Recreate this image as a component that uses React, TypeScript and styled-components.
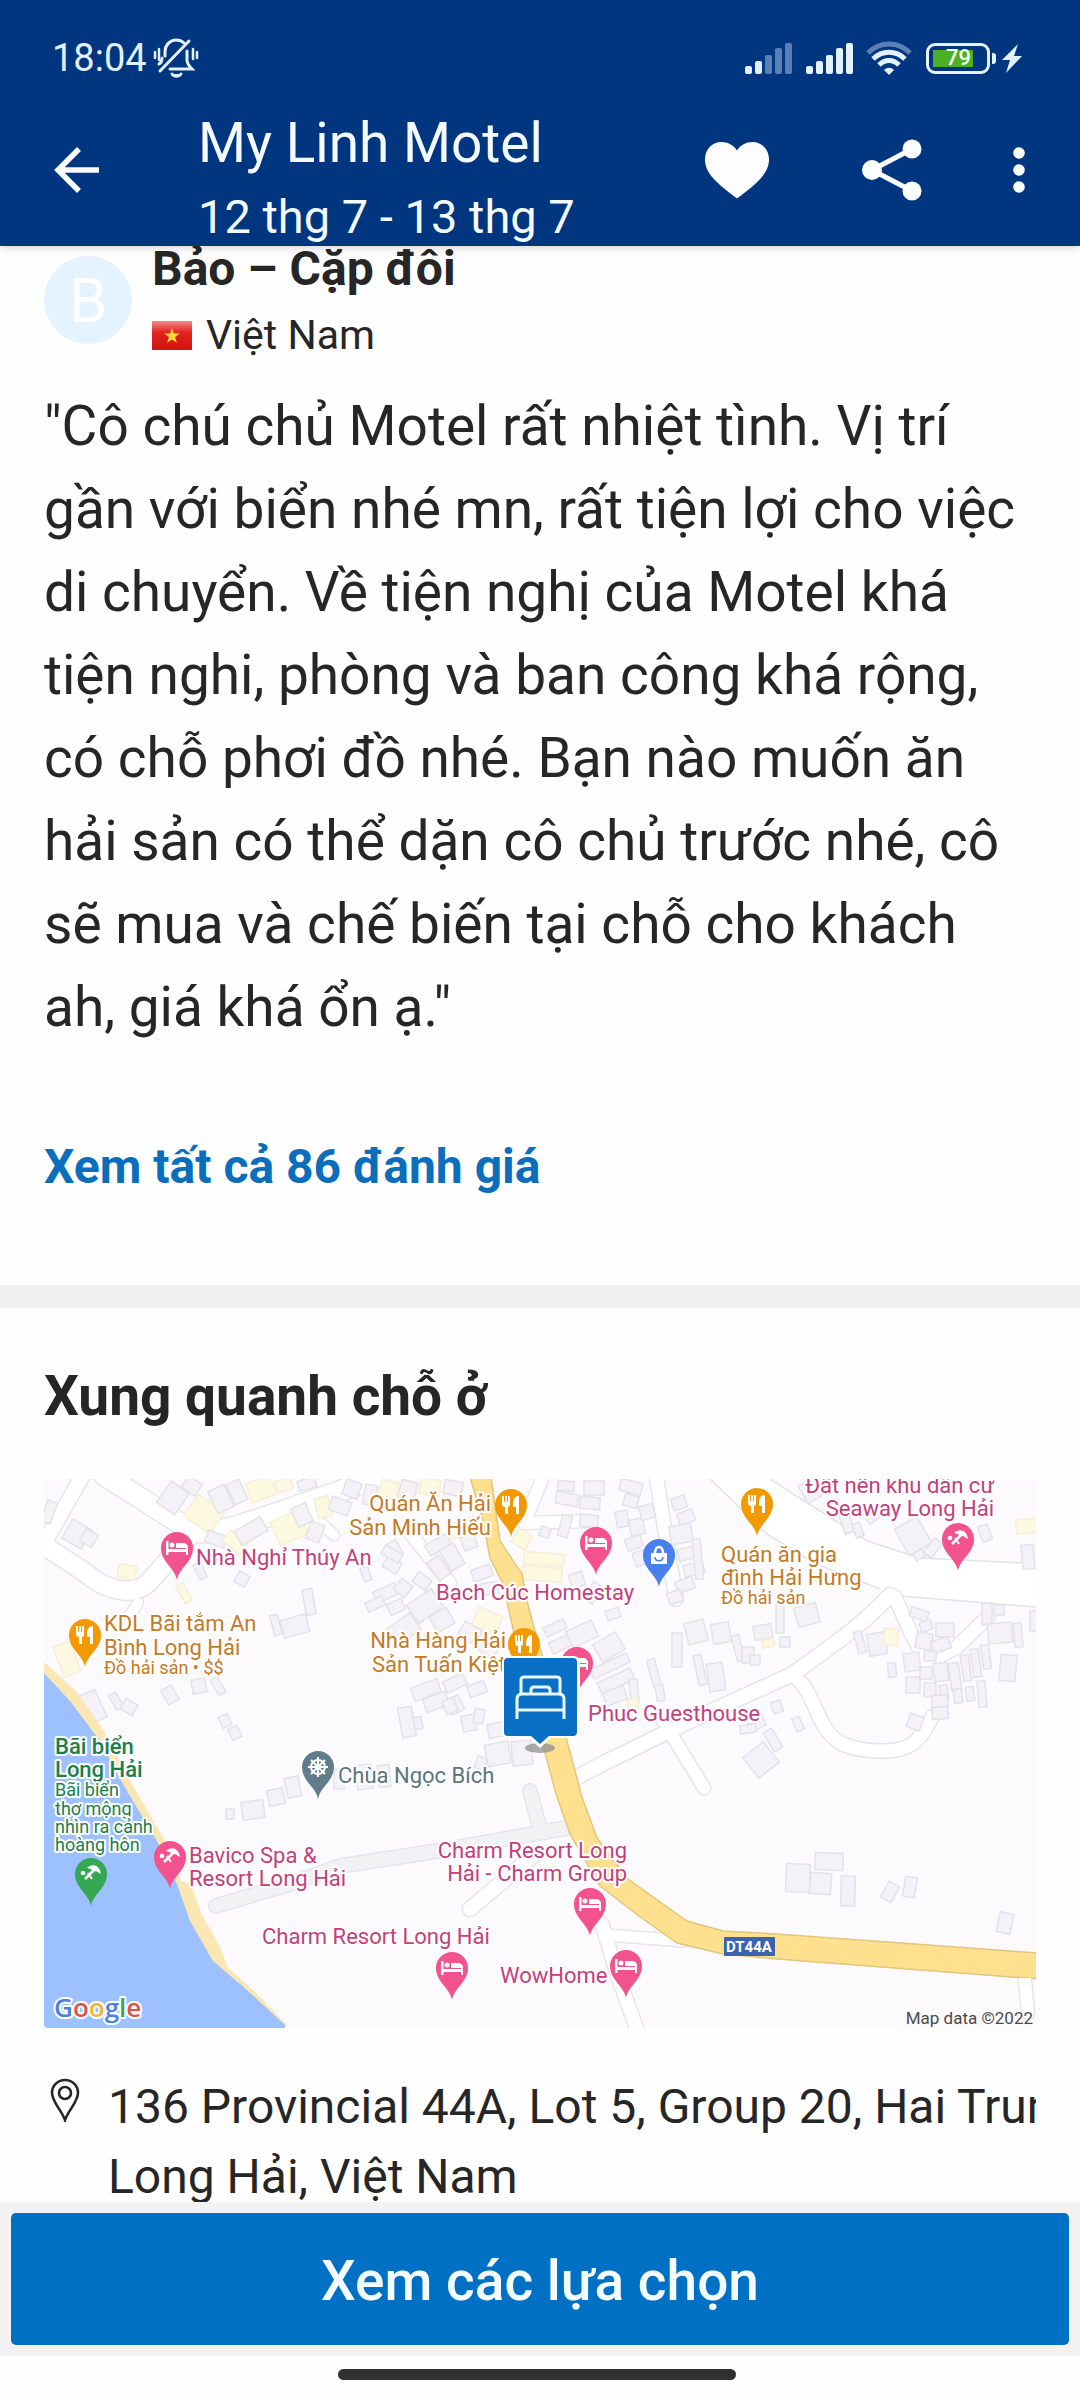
import React from "react";
import styled, { createGlobalStyle } from "styled-components";

const GlobalStyle = createGlobalStyle`
  *, *::before, *::after { box-sizing: border-box; }
  body {
    margin: 0;
    background: #fff;
    color: #262626;
    font-family: Roboto, "Noto Sans", sans-serif;
  }
  h1, h2, p, blockquote { margin: 0; }
`;

const Screen = styled.div`
  display: flex;
  flex-direction: column;
  height: 100vh;
  background: #fefefe;
`;

/* ---------- header ---------- */

const Header = styled.header`
  position: relative;
  z-index: 1;
  flex: none;
  background: #003580;
  color: #f4faff;
  box-shadow: 0 2px 8px rgba(0, 0, 0, 0.16);
`;

const StatusBar = styled.div`
  display: flex;
  align-items: center;
  justify-content: space-between;
  height: 94px;
  padding: 22px 58px 0 52px;
  color: #e3f0ff;
`;

const StatusGroup = styled.div<{ $gap: number }>`
  display: flex;
  align-items: center;
  gap: ${(p) => p.$gap}px;
`;

const Clock = styled.span`
  font-size: 38px;
  line-height: 44px;
`;

const Battery = styled.span`
  display: flex;
  position: relative;
  width: 64px;
  height: 31px;
  padding: 4px;
  border: 3px solid #e3f4ff;
  border-radius: 9px;
  margin: 0 10px 0 2px;

  &::after {
    content: "";
    position: absolute;
    right: -9px;
    top: 7px;
    width: 4px;
    height: 11px;
    border-radius: 0 3px 3px 0;
    background: #e3f4ff;
  }
`;

const BatteryLevel = styled.span`
  display: flex;
  align-items: center;
  justify-content: flex-end;
  width: 40px;
  padding-right: 2px;
  background: #4caf27;
  color: #f2ffee;
  font-size: 22px;
  font-weight: 500;
  line-height: 16px;
`;

const AppBar = styled.div`
  display: flex;
  align-items: center;
  gap: 35px;
  height: 152px;
  padding: 0 29px 0 36px;
`;

const IconButton = styled.button<{ $width: number }>`
  display: flex;
  align-items: center;
  justify-content: center;
  flex: none;
  width: ${(p) => p.$width}px;
  height: 96px;
  padding: 0;
  border: 0;
  background: none;
  color: #fbfdff;
  cursor: pointer;
`;

const TitleBlock = styled.div`
  align-self: flex-start;
  flex: 1;
  min-width: 0;
  padding: 10px 0 0 45px;
  white-space: nowrap;
`;

const Title = styled.h1`
  font-size: 55px;
  font-weight: 400;
  line-height: 78px;
`;

const Dates = styled.p`
  font-size: 47px;
  line-height: 70px;
`;

/* ---------- content ---------- */

const Content = styled.main`
  flex: 1;
  min-height: 0;
  overflow: hidden auto;
  scrollbar-width: none;
`;

const ReviewSection = styled.section`
  margin-top: -7px;
  padding: 0 44px 88px;
`;

const Reviewer = styled.div`
  display: flex;
  gap: 20px;
`;

const Avatar = styled.div`
  display: flex;
  align-items: center;
  justify-content: center;
  flex: none;
  width: 88px;
  height: 88px;
  margin-top: 17px;
  border-radius: 50%;
  background: #e4f3fe;
  color: #fff;
  font-size: 62px;
`;

const ReviewerName = styled.p`
  font-size: 48px;
  font-weight: 700;
  line-height: 60px;
`;

const Country = styled.p`
  display: flex;
  align-items: center;
  gap: 14px;
  margin-top: 8px;
  font-size: 41px;
  line-height: 56px;
`;

const Quote = styled.blockquote`
  margin-top: 22px;
  font-size: 55px;
  line-height: 83px;
`;

const AllReviews = styled.a`
  display: inline-block;
  margin-top: 88px;
  color: #0a6ebd;
  font-size: 48px;
  font-weight: 700;
  line-height: 60px;
  text-decoration: none;
`;

const Divider = styled.hr`
  height: 23px;
  margin: 0;
  border: 0;
  background: #f0f0f0;
`;

const AreaSection = styled.section`
  padding: 52px 44px 20px;
`;

const SectionTitle = styled.h2`
  font-size: 55px;
  font-weight: 700;
  line-height: 72px;
`;

const MapFigure = styled.svg`
  display: block;
  width: 100%;
  margin-top: 47px;
  border-radius: 4px;
`;

const Address = styled.address`
  display: flex;
  gap: 28px;
  margin-top: 44px;
  padding-left: 6px;
  font-size: 48px;
  font-style: normal;
  line-height: 70px;

  svg {
    flex: none;
    margin-top: 6px;
  }
`;

const AddressText = styled.div`
  min-width: 0;
  overflow: hidden;
  white-space: nowrap;
`;

/* ---------- footer ---------- */

const Footer = styled.footer`
  position: relative;
  flex: none;
  padding: 11px;
  background: #f2f2f2;
`;

const ChoiceButton = styled.button`
  display: block;
  width: 100%;
  height: 132px;
  padding: 4px 0 0;
  border: 0;
  border-radius: 5px;
  background: #0070c4;
  color: #f4fbff;
  font-family: inherit;
  font-size: 55px;
  font-weight: 500;
  cursor: pointer;
`;

const GestureArea = styled.div`
  display: flex;
  justify-content: center;
  flex: none;
  height: 44px;
  padding: 13px 6px 0 0;
`;

const GestureHandle = styled.div`
  width: 37%;
  height: 11px;
  border-radius: 6px;
  background: #303030;
`;

/* ---------- map text ---------- */

const Label = styled.text<{ $size?: number; $weight?: number }>`
  font-family: Roboto, "Noto Sans", sans-serif;
  font-size: ${(p) => p.$size ?? 22}px;
  font-weight: ${(p) => p.$weight ?? 400};
  paint-order: stroke;
  stroke: #fff;
  stroke-width: 4px;
  stroke-linejoin: round;
`;

const Plain = styled.text<{ $size: number; $weight?: number }>`
  font-family: Roboto, "Noto Sans", sans-serif;
  font-size: ${(p) => p.$size}px;
  font-weight: ${(p) => p.$weight ?? 400};
`;

const MapBrand = styled(Label)`
  font-family: "Open Sans", sans-serif;
`;

/* ---------- icons ---------- */

const BellOff = () => (
  <svg width="46" height="40" viewBox="0 0 46 40" fill="none" stroke="currentColor" strokeWidth="3" strokeLinecap="round" aria-label="Silent">
    <path d="M36 3 7 33" />
    <path d="M12 18v-4C12 7 17 2 23 2c3 0 6 1 8 3" />
    <path d="M34 13v9c0 4 2 6 5 9H17" />
    <path d="M9 20c0 3-1 5-3 6" />
    <path d="M19 36c2 3 7 3 9 0" fill="currentColor" />
    <path d="M2 14v6M6 11v11M40 11v10M44 14v6" strokeWidth="2.5" />
  </svg>
);

const Signal = ({ level }: { level: number }) => (
  <svg width="49" height="32" viewBox="0 0 49 32" fill="currentColor" aria-label="Signal">
    {[8, 13, 19, 26, 31].map((h, i) => (
      <rect key={h} x={i * 10 + 1} y={32 - h} width="7" height={h} rx="2" opacity={i < level ? 1 : 0.4} />
    ))}
  </svg>
);

const Wifi = () => (
  <svg width="46" height="34" viewBox="0 0 46 34" fill="none" stroke="currentColor" strokeWidth="5" aria-label="Wi-Fi">
    <path d="M2 12C14 0 32 0 44 12" opacity=".4" />
    <path d="M7 18c9-9 23-9 32 0" />
    <path d="M13 24c6-6 14-6 20 0" />
    <path d="M23 34l-5-5c3-3 7-3 10 0z" fill="currentColor" stroke="none" />
  </svg>
);

const Bolt = () => (
  <svg width="20" height="29" viewBox="0 0 20 29" fill="currentColor" aria-label="Charging">
    <path d="M16 0 0 16h8L4 29 20 12h-8z" />
  </svg>
);

const Back = () => (
  <svg width="46" height="46" viewBox="0 0 46 46" fill="none" stroke="currentColor" strokeWidth="5.5">
    <path d="M45 23H5M25 2 4 23l21 21" />
  </svg>
);

const Heart = () => (
  <svg width="66" height="58" viewBox="0 0 66 58" fill="currentColor">
    <path d="M33 57.500C14 43 1 33 1 18.500 1 8 8.500 1 17.500 1 24 1 29.500 4 33 9.500 36.500 4 42 1 48.500 1 57.500 1 65 8 65 18.500 65 33 52 43 33 57.500z" />
  </svg>
);

const Share = () => (
  <svg width="60" height="62" viewBox="0 0 60 62" fill="currentColor" stroke="currentColor">
    <path d="M50 10 10 31l40 21" fill="none" strokeWidth="5" />
    <circle cx="50" cy="10" r="9.500" stroke="none" />
    <circle cx="10" cy="31" r="10" stroke="none" />
    <circle cx="50" cy="52" r="9.500" stroke="none" />
  </svg>
);

const More = () => (
  <svg width="12" height="46" viewBox="0 0 12 46" fill="currentColor">
    <circle cx="6" cy="6" r="5.800" />
    <circle cx="6" cy="23" r="5.800" />
    <circle cx="6" cy="40" r="5.800" />
  </svg>
);

const VietnamFlag = () => (
  <svg width="40" height="29" viewBox="0 0 40 29" aria-hidden="true">
    <defs>
      <linearGradient id="flag" x1="0" y1="0" x2="0" y2="1">
        <stop offset="0" stopColor="#ee8a86" />
        <stop offset=".4" stopColor="#e3221c" />
        <stop offset="1" stopColor="#cf1410" />
      </linearGradient>
    </defs>
    <rect width="40" height="29" fill="url(#flag)" />
    <path d="M20 7l1.900 5.500 5.800.1-4.600 3.500 1.700 5.600-4.800-3.300-4.800 3.300 1.700-5.600-4.600-3.500 5.800-.1z" fill="#ffd83a" />
  </svg>
);

const PlacePin = () => (
  <svg width="30" height="44" viewBox="0 0 30 44" fill="none" stroke="#262626" strokeWidth="2.600" aria-hidden="true">
    <path d="M15 42C11 31 2 24 2 14.500 2 7.500 8 2 15 2s13 5.500 13 12.500C28 24 19 31 15 42z" />
    <circle cx="15" cy="15" r="6" />
  </svg>
);

/* ---------- map ---------- */

type Building = [x: number, y: number, w: number, h: number, angle: number, tone?: "y"];

const buildings: Building[] = [
  [0, 22, 10, 22, 20], [22, 44, 22, 22, 30], [38, 52, 14, 14, 30], [118, 6, 22, 26, 35], [140, 0, 16, 14, 35],
  [144, 22, 32, 26, 35, "y"], [168, 8, 18, 24, -25], [186, 2, 14, 22, -25], [204, 0, 26, 20, -20, "y"], [232, 0, 16, 12, -20, "y"],
  [254, 0, 18, 10, -15], [162, 54, 20, 12, 20], [180, 56, 22, 14, 40, "y"], [192, 44, 30, 16, -30], [230, 36, 30, 26, -25, "y"],
  [250, 26, 16, 20, -25], [264, 44, 14, 18, 20], [272, 18, 14, 20, -15, "y"], [286, 20, 20, 14, 20], [300, 2, 16, 16, 20],
  [320, 6, 12, 20, 10], [336, 2, 18, 16, 15, "y"], [356, 2, 16, 18, 15], [376, 0, 20, 16, 10, "y"], [400, 2, 18, 14, 10],
  [152, 84, 8, 16, -25], [192, 94, 12, 12, 30], [136, 104, 8, 20, -30, "y"], [74, 86, 18, 14, 10, "y"],
  [260, 110, 10, 26, -10], [238, 138, 26, 18, -15], [228, 136, 8, 20, -15], [318, 88, 8, 14, -20], [340, 80, 16, 12, 30],
  [346, 62, 10, 16, -30], [330, 108, 24, 12, -25], [322, 120, 18, 10, -25], [344, 122, 16, 12, -25], [352, 102, 14, 14, 40],
  [370, 96, 16, 12, 35], [366, 116, 30, 22, -35], [388, 132, 20, 18, -30], [346, 140, 28, 20, -35], [338, 70, 20, 10, 30],
  [382, 60, 24, 12, -30], [400, 66, 16, 24, -30], [388, 78, 14, 22, -35], [404, 44, 18, 14, -20, "y"], [418, 56, 14, 14, -20],
  [428, 88, 20, 12, -20], [432, 104, 22, 12, -10], [430, 132, 26, 20, 25, "y"], [416, 146, 20, 16, 30], [434, 160, 20, 16, 35],
  [368, 204, 28, 14, -20], [380, 216, 24, 14, -20], [400, 198, 22, 12, -25], [424, 204, 18, 12, -20], [404, 218, 14, 16, -25],
  [356, 228, 14, 30, -10], [370, 238, 8, 12, -10], [400, 220, 12, 14, -25], [418, 236, 14, 16, -10], [430, 230, 10, 14, 10],
  [442, 264, 24, 22, -10], [468, 262, 20, 24, -5], [444, 244, 18, 14, -10], [432, 278, 10, 12, 20],
  [120, 208, 12, 16, -30], [148, 200, 14, 14, -10], [170, 198, 8, 18, -30], [176, 236, 10, 12, -25], [186, 248, 10, 12, -25],
  [68, 214, 8, 16, -30], [78, 222, 14, 12, 30], [34, 214, 24, 30, -25], [14, 164, 18, 32, -20, "y"],
  [182, 330, 8, 10, 0], [198, 322, 22, 18, -8], [224, 310, 16, 16, -12], [242, 298, 14, 20, -12], [290, 290, 10, 20, 0], [312, 286, 16, 24, -8], [334, 286, 12, 22, -5],
  [480, 74, 40, 12, 4, "y"], [478, 88, 40, 14, 4, "y"], [516, 36, 10, 22, 15], [470, 52, 16, 16, 30, "y"], [496, 48, 10, 10, 20],
  [512, 14, 22, 12, 10], [536, 18, 20, 12, 5], [514, 2, 16, 10, 5], [540, 2, 20, 14, 0], [536, 36, 18, 12, 5],
  [576, 2, 22, 12, 15], [580, 16, 14, 12, 15], [572, 32, 12, 16, -10], [586, 40, 14, 16, -10], [596, 26, 14, 14, -15], [582, 58, 16, 12, -20],
  [590, 72, 14, 14, -20], [628, 18, 14, 12, -20], [634, 32, 16, 12, -20], [626, 46, 22, 18, -10], [634, 68, 22, 12, -15],
  [640, 84, 20, 12, -15], [632, 100, 18, 12, -20], [624, 112, 14, 12, -20], [650, 60, 8, 40, -5],
  [526, 94, 14, 14, -20], [500, 144, 22, 10, -25], [506, 158, 26, 12, -25], [524, 146, 28, 18, -25], [562, 130, 14, 10, -20], [544, 104, 10, 20, 30],
  [552, 158, 26, 20, -30], [546, 182, 40, 10, -25], [554, 196, 36, 12, -25], [560, 210, 22, 14, -20], [586, 200, 8, 24, -5], [584, 220, 10, 10, 0, "y"],
  [606, 180, 8, 28, -15], [612, 206, 8, 16, -10], [628, 154, 10, 34, 0], [642, 142, 20, 22, -15], [668, 144, 18, 20, -10], [652, 176, 8, 30, -12],
  [664, 184, 16, 28, -8], [690, 156, 8, 26, -15], [698, 168, 12, 16, 0], [710, 146, 18, 14, -10], [718, 160, 12, 8, -10, "y"], [706, 176, 10, 10, 0],
  [732, 126, 8, 28, 0], [736, 158, 10, 10, 0], [752, 126, 22, 20, -15], [728, 222, 10, 12, -20], [750, 238, 8, 14, -25], [704, 236, 16, 14, -25], [696, 246, 16, 8, -10],
  [724, 250, 10, 22, -30], [704, 268, 26, 26, -38], [812, 152, 8, 22, -15], [824, 154, 18, 22, -10], [840, 150, 14, 16, 5, "y"],
  [844, 184, 8, 14, -5], [758, 2, 16, 20, -30], [798, 36, 10, 18, -20], [810, 44, 8, 14, -20], [822, 34, 14, 8, -40], [856, 42, 26, 30, -30],
  [884, 60, 10, 18, 40], [870, 72, 10, 8, -30], [936, 46, 10, 16, -20], [972, 40, 24, 14, -5, "y"], [978, 66, 12, 24, -5],
  [866, 130, 18, 10, 20], [876, 142, 12, 10, -20], [872, 154, 16, 16, 10], [892, 144, 18, 14, 0], [888, 160, 18, 12, -20], [880, 172, 12, 10, 0],
  [938, 124, 10, 22, 0], [950, 126, 10, 10, 0], [944, 144, 24, 20, -5], [970, 144, 8, 24, -5], [956, 176, 16, 26, 5], [986, 132, 8, 20, 0],
  [860, 174, 16, 18, -8], [862, 198, 14, 16, 0], [876, 188, 12, 12, 0], [890, 184, 14, 18, -5], [906, 184, 10, 28, -8], [918, 176, 8, 26, -8],
  [928, 170, 8, 28, -8], [938, 166, 8, 24, -8], [880, 204, 12, 14, 0], [896, 206, 8, 14, -8], [910, 210, 8, 14, -8], [922, 208, 8, 14, -8],
  [934, 202, 8, 26, -5], [888, 216, 16, 12, -5], [888, 228, 16, 12, -5], [864, 236, 14, 14, 20],
  [742, 385, 24, 28, 2], [771, 374, 28, 17, 2], [766, 394, 21, 21, 4], [797, 397, 14, 30, 2], [840, 404, 12, 18, 30], [860, 398, 12, 20, 10], [954, 434, 14, 20, 12],
];

const streets: [d: string, width: number][] = [
  ["M39-4 4 58", 14],
  ["M-4 64 39 92C62 112 88 118 104 104L150 52", 18],
  ["M94 124 86 136", 10],
  ["M60-4 148 52C170 58 206 44 330 0", 20],
  ["M262 30 290 56", 10],
  ["M366 54 406 104", 12],
  ["M500-4 480 44 545 42", 12],
  ["M612-4 632 120", 13],
  ["M846 116C820 145 790 165 749 195L650 240 560 284 524 303", 14],
  ["M751 198C766 210 768 225 779 245S805 271 836 272 876 262 888 238", 13],
  ["M851 118 866 152 883 184 913 168 944 138", 13],
  ["M618 240 660 309", 12],
  ["M426 430 490 376", 14],
  ["M558 445 573 495 594 553", 13],
  ["M563 456 640 462", 11],
  ["M980 490 984 534", 12],
];

const PIN = "M0 0C-2-12-16-18-16-32a16 16 0 0 1 32 0C16-18 2-12 0 0z";

const tones = { pink: "#f2528d", food: "#f29900", green: "#34a853", blue: "#4a80ee", temple: "#607d8b" };

type Kind = "bed" | "fork" | "spa" | "bag" | "wheel";

const Glyph = ({ kind }: { kind: Kind }) => {
  switch (kind) {
    case "bed":
      return (
        <g fill="#fff">
          <path d="M-11-39h2.500v8H9v-3h2v9H9v-3H-8.500v3H-11z" />
          <circle cx="-5" cy="-35" r="2.500" />
          <path d="M-1-37h7c3 0 5 2 5 5H-1z" />
        </g>
      );
    case "fork":
      return (
        <g fill="#fff">
          <path d="M-9-41h2v6h1v-6h2v6h1v-6h2v8c0 2-1 3-2 3v7h-3v-7c-2 0-3-1-3-3z" />
          <path d="M2-33c0-5 2-8 6-8v18H5v-7H2z" />
        </g>
      );
    case "spa":
      return (
        <g fill="#fff">
          <path d="M-4-38c5-5 13-3 14 6l-5-3-3 1-2-3z" />
          <path d="M2-35-6-27" stroke="#fff" strokeWidth="2.500" />
          <circle cx="-8" cy="-33" r="2.300" />
          <path d="M-3-33 1-27" stroke="#fff" strokeWidth="2" />
        </g>
      );
    case "bag":
      return (
        <g>
          <path d="M-8-34H8v11H-8z" fill="#fff" />
          <path d="M-4-34c0-8 8-8 8 0" fill="none" stroke="#fff" strokeWidth="2.500" />
          <path d="M-4-30c0 5 8 5 8 0" fill="none" stroke="#4a80ee" strokeWidth="1.500" />
        </g>
      );
    case "wheel":
      return (
        <g stroke="#fff" fill="none" strokeWidth="2">
          <circle cy="-32" r="7" />
          <circle cy="-32" r="2" />
          <path d="M0-42v20M-10-32h20M-7-39 7-25M7-39-7-25" />
        </g>
      );
  }
};

const pins: [x: number, y: number, tone: keyof typeof tones, kind: Kind][] = [
  [133, 101, "pink", "bed"],
  [41, 188, "food", "fork"],
  [467, 58, "food", "fork"],
  [552, 96, "pink", "bed"],
  [615, 108, "blue", "bag"],
  [533, 216, "pink", "bed"],
  [480, 197, "food", "fork"],
  [713, 57, "food", "fork"],
  [914, 92, "pink", "spa"],
  [274, 320, "temple", "wheel"],
  [126, 410, "pink", "spa"],
  [47, 427, "green", "spa"],
  [546, 457, "pink", "bed"],
  [408, 521, "pink", "bed"],
  [582, 519, "pink", "bed"],
];

type MapLabel = { x: number; color: string; end?: boolean; lines: [text: string, y: number, size?: number, weight?: number][] };

const PINK = "#c2407c";
const FOOD = "#c47a26";
const SEA = "#1d7d4b";

const labels: MapLabel[] = [
  { x: 152, color: PINK, lines: [["Nhà Nghỉ Thúy An", 86]] },
  { x: 60, color: FOOD, lines: [["KDL Bãi tắm An", 152], ["Bình Long Hải", 176], ["Đồ hải sản • $$", 195, 18]] },
  { x: 447, color: FOOD, end: true, lines: [["Quán Ăn Hải", 32], ["Sản Minh Hiếu", 56]] },
  { x: 392, color: PINK, lines: [["Bạch Cúc Homestay", 121]] },
  { x: 462, color: FOOD, end: true, lines: [["Nhà Hàng Hải", 169], ["Sản Tuấn Kiệt", 193]] },
  { x: 544, color: PINK, lines: [["Phuc Guesthouse", 242]] },
  { x: 950, color: PINK, end: true, lines: [["Đất nền khu dân cư", 14], ["Seaway Long Hải", 37]] },
  { x: 677, color: FOOD, lines: [["Quán ăn gia", 83], ["đình Hải Hưng", 106], ["Đồ hải sản", 125, 18]] },
  {
    x: 11,
    color: SEA,
    lines: [
      ["Bãi biển", 275, 22, 500], ["Long Hải", 298, 22, 500],
      ["Bãi biển", 317, 18], ["thơ mộng", 336, 18], ["nhìn ra cảnh", 354, 18], ["hoàng hôn", 372, 18],
    ],
  },
  { x: 294, color: "#5b747c", lines: [["Chùa Ngọc Bích", 304]] },
  { x: 145, color: PINK, lines: [["Bavico Spa &", 384], ["Resort Long Hải", 407]] },
  { x: 583, color: PINK, end: true, lines: [["Charm Resort Long", 379], ["Hải - Charm Group", 402]] },
  { x: 218, color: PINK, lines: [["Charm Resort Long Hải", 465]] },
  { x: 456, color: PINK, lines: [["WowHome", 504]] },
];

const AreaMap = () => (
  <MapFigure viewBox="0 0 992 549" role="img" aria-label="Long Hải">
    <rect width="992" height="549" fill="#fcfafd" />

    {/* wide junction in the north-east */}
    <path d="M666 0 723 55 770 84 836 110 856 117 992 128V85L876 79 823 62 726 0z" fill="#fff" />
    <path d="M666 0 723 55 770 84 836 110M856 117 992 128M980 84 876 79 823 62 726 0" fill="none" stroke="#e2e3e8" strokeWidth="1.500" />

    <g fill="none" strokeLinecap="round" strokeLinejoin="round">
      {streets.map(([d, w]) => <path key={d} d={d} stroke="#e5e6eb" strokeWidth={w + 3} />)}
      {streets.map(([d, w]) => <path key={d} d={d} stroke="#fff" strokeWidth={w} />)}
      <g stroke="#e5e6ea" strokeWidth="16">
        <path d="M172 427 246 405 296 387 393 372 523 349M486 312 496 350" />
      </g>
      <g stroke="#f2f2f5" strokeWidth="13">
        <path d="M172 427 246 405 296 387 393 372 523 349M486 312 496 350" />
      </g>
    </g>

    <g strokeWidth="1.500">
      {buildings.map(([x, y, w, h, a, tone], i) => (
        <rect
          key={i}
          x={x}
          y={y}
          width={w}
          height={h}
          transform={`rotate(${a} ${x + w / 2} ${y + h / 2})`}
          fill={tone ? "#fdf8e0" : "#f4f2f6"}
          stroke={tone ? "#f5eed8" : "#e2e3e8"}
        />
      ))}
    </g>

    {/* shoreline */}
    <path d="M0 183 33 213 60 252 84 298 120 360 137 402 147 405 157 434 176 468 184 489 210 512 243 546 239 549H0z" fill="#fbe7b4" />
    <path d="M0 194 26 222 56 262 79 305 113 362 133 405 146 442 169 482 203 511 241 546V549H0z" fill="#9dc1fe" />

    {/* provincial road */}
    <path
      d="M426-2 439 42 446 79 459 105 468 145 480 200 498 262 512 315 526 355 556 407 595 437 633 464 679 475 733 480 994 500V474L733 455 679 452 643 442 584 400 553 359 538 318 523 262 505 200 489 145 483 122 478 95 456 62 447-2z"
      fill="#fee08f"
      stroke="#e0c77c"
      strokeWidth="1.500"
    />
    <path d="M975 499h12v8h-12z" fill="#fff" />

    <rect x="680" y="458" width="51" height="19" rx="1" fill="#3b63ae" />
    <Plain x="705" y="473" textAnchor="middle" fill="#fff" $size={15} $weight={700}>DT44A</Plain>

    {pins.map(([x, y, tone, kind]) => (
      <g key={`${x}-${y}`} transform={`translate(${x} ${y})`}>
        <path d={PIN} fill={tones[tone]} />
        <Glyph kind={kind} />
      </g>
    ))}

    {labels.map((label) =>
      label.lines.map(([text, y, size, weight]) => (
        <Label key={text + y} x={label.x} y={y} fill={label.color} textAnchor={label.end ? "end" : "start"} $size={size} $weight={weight}>
          {text}
        </Label>
      ))
    )}

    {/* this property */}
    <ellipse cx="496" cy="269" rx="15" ry="5" fill="#8d8d8d" opacity=".75" />
    <path d="M464 177h66a6 6 0 0 1 6 6v70a6 6 0 0 1-6 6h-23l-11 10-11-10h-21a6 6 0 0 1-6-6v-70a6 6 0 0 1 6-6z" fill="#fff" />
    <path d="M464 179h65a4 4 0 0 1 4 4v70a4 4 0 0 1-4 4h-24l-9 8-9-8h-23a4 4 0 0 1-4-4v-70a4 4 0 0 1 4-4z" fill="#0a70c6" />
    <path d="M473 240v-20q0-5 5-5h37q5 0 5 5v20M473 231h47M477 215v-14q0-3 3-3h33q3 0 3 3v14M487 214v-3q0-3 3-3h13q3 0 3 3v3" fill="none" stroke="#eaf6ff" strokeWidth="3" />

    <MapBrand x="10" y="538" $size={26} $weight={600}>
      <tspan fill="#4a7fe0">G</tspan>
      <tspan fill="#d9534a">o</tspan>
      <tspan fill="#edb83a">o</tspan>
      <tspan fill="#4a7fe0">g</tspan>
      <tspan fill="#3fa05a">l</tspan>
      <tspan fill="#d9534a">e</tspan>
    </MapBrand>
    <Plain x="989" y="545" textAnchor="end" fill="#4a4a4a" $size={17}>Map data ©2022</Plain>
  </MapFigure>
);

export default function App() {
  return (
    <Screen>
      <GlobalStyle />
      <Header>
        <StatusBar>
          <StatusGroup $gap={6}>
            <Clock>18:04</Clock>
            <BellOff />
          </StatusGroup>
          <StatusGroup $gap={12}>
            <Signal level={2} />
            <Signal level={5} />
            <Wifi />
            <StatusGroup $gap={2}>
              <Battery>
                <BatteryLevel>79</BatteryLevel>
              </Battery>
              <Bolt />
            </StatusGroup>
          </StatusGroup>
        </StatusBar>
        <AppBar>
          <IconButton $width={82} aria-label="Back"><Back /></IconButton>
          <TitleBlock>
            <Title>My Linh Motel</Title>
            <Dates>12 thg 7 - 13 thg 7</Dates>
          </TitleBlock>
          <IconButton $width={120} aria-label="Save"><Heart /></IconButton>
          <IconButton $width={120} aria-label="Share"><Share /></IconButton>
          <IconButton $width={64} aria-label="More"><More /></IconButton>
        </AppBar>
      </Header>

      <Content>
        <ReviewSection>
          <Reviewer>
            <Avatar>B</Avatar>
            <div>
              <ReviewerName>Bảo – Cặp đôi</ReviewerName>
              <Country><VietnamFlag />Việt Nam</Country>
            </div>
          </Reviewer>
          <Quote>
            "Cô chú chủ Motel rất nhiệt tình. Vị trí gần với biển nhé mn, rất tiện lợi cho việc di chuyển. Về tiện nghị của
            Motel khá tiện nghi, phòng và ban công khá rộng, có chỗ phơi đồ nhé. Bạn nào muốn ăn hải sản có thể dặn cô chủ
            trước nhé, cô sẽ mua và chế biến tại chỗ cho khách ah, giá khá ổn ạ."
          </Quote>
          <AllReviews href="#reviews">Xem tất cả 86 đánh giá</AllReviews>
        </ReviewSection>

        <Divider />

        <AreaSection>
          <SectionTitle>Xung quanh chỗ ở</SectionTitle>
          <AreaMap />
          <Address>
            <PlacePin />
            <AddressText>
              136 Provincial 44A, Lot 5, Group 20, Hai Trung,
              <br />
              Long Hải, Việt Nam
            </AddressText>
          </Address>
        </AreaSection>
      </Content>

      <Footer>
        <ChoiceButton>Xem các lựa chọn</ChoiceButton>
      </Footer>
      <GestureArea>
        <GestureHandle />
      </GestureArea>
    </Screen>
  );
}
